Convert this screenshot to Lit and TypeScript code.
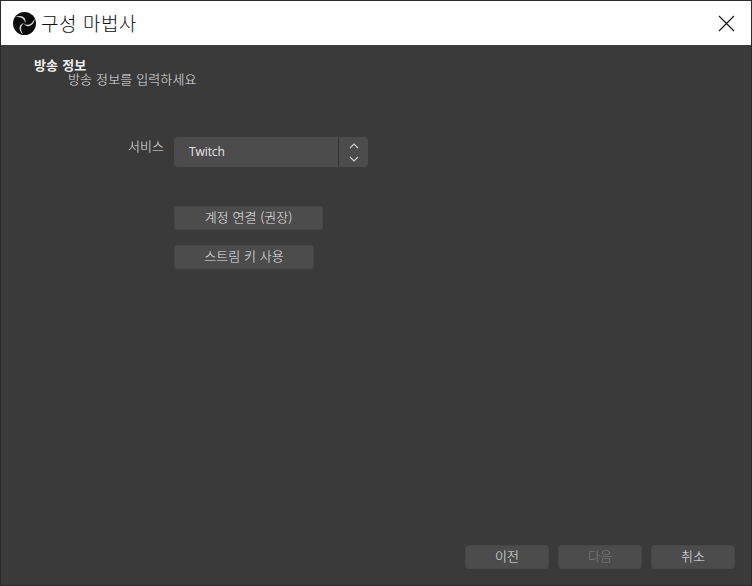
import { LitElement, html, css, svg } from "lit";
import { customElement } from "lit/decorators.js";

const FONT = css`"Noto Sans CJK KR", "Noto Sans", sans-serif`;

const blade = svg`<path d="M11.4 12.2 C14.6 14.6 19.6 13.6 22.4 7.4 C22.6 12.6 16.4 18.4 11.4 12.2 Z" fill="#d4d4d4"/>`;

@customElement("app-root")
export class AppRoot extends LitElement {
  static styles = css`
    :host {
      display: block;
      width: 752px;
      height: 586px;
      font-family: ${FONT};
      font-size: 13px;
      font-weight: 300;
      color: #e6e6e6;
    }
    .window {
      box-sizing: border-box;
      width: 752px;
      height: 586px;
      display: flex;
      flex-direction: column;
      background: #3a3a3a;
      border: 1px solid #2a2a2a;
    }
    .title {
      height: 44px;
      flex: none;
      background: #fff;
      color: #111;
      display: flex;
      align-items: center;
      padding: 0 14px 0 12px;
      gap: 5px;
    }
    .title h1 {
      margin: 0;
      font-size: 19px;
      font-weight: 300;
      letter-spacing: 0.6px;
      word-spacing: 1px;
      flex: 1;
      line-height: 24px;
    }
    .logo { width: 23px; height: 23px; flex: none; }
    .close { width: 17px; height: 17px; flex: none; margin-right: 2px; }
    .body {
      flex: 1;
      display: flex;
      flex-direction: column;
      padding: 12px 16px 0 33px;
    }
    .heading {
      font-size: 13px;
      font-weight: 700;
      line-height: 16px;
      letter-spacing: 0.1px;
      word-spacing: 1px;
      color: #efefef;
    }
    .sub {
      font-size: 13px;
      line-height: 14px;
      margin-top: -1px;
      margin-left: 34px;
      letter-spacing: 0.1px;
      word-spacing: 1px;
      color: #e2e2e2;
    }
    .form {
      margin-top: 51px;
      display: flex;
      flex-direction: column;
      margin-left: 94px;
    }
    .row { display: flex; gap: 10px; }
    .label { width: 36px; line-height: 18px; text-align: right; }
    .select { display: flex; width: 194px; height: 30px; }
    .value {
      flex: 1;
      background: #4c4c4c;
      border-radius: 4px 0 0 4px;
      padding-left: 15px;
      line-height: 29px;
      font-family: "Open Sans", sans-serif;
      font-size: 12px;
      font-weight: 400;
      letter-spacing: -0.1px;
    }
    .spin {
      width: 29px;
      background: #4c4c4c;
      border-left: 1px solid #333;
      border-radius: 0 4px 4px 0;
      display: flex;
      flex-direction: column;
      align-items: center;
      justify-content: center;
      gap: 7px;
    }
    .spin svg { width: 10px; height: 6px; display: block; }
    .buttons {
      margin-left: 46px;
      margin-top: 39px;
      display: flex;
      flex-direction: column;
      align-items: flex-start;
      gap: 15px;
    }
    button {
      font: inherit;
      color: #e6e6e6;
      background: #4c4c4c;
      border: 0;
      border-radius: 4px;
      padding: 0 0 2px;
      height: 24px;
      line-height: 22px;
      word-spacing: 1px;
      box-shadow: inset 0 0 0 1px #474747;
    }
    .b1 { width: 149px; }
    .b2 { width: 140px; }
    .footer {
      margin-top: auto;
      margin-bottom: 16px;
      display: flex;
      justify-content: flex-end;
      gap: 9px;
    }
    .footer button { width: 84px; }
    .footer button[disabled] { color: #7d7d7d; }
  `;

  render() {
    return html`
      <div class="window">
        <header class="title">
          <svg class="logo" viewBox="0 0 24 24">
            <circle cx="12" cy="12" r="12" fill="#0b0b0b" />
            <g>
              ${blade}
              <g transform="rotate(120 12 12)">${blade}</g>
              <g transform="rotate(240 12 12)">${blade}</g>
            </g>
          </svg>
          <h1>구성 마법사</h1>
          <svg class="close" viewBox="0 0 17 17">
            <path d="M1 1 L16 16 M16 1 L1 16" stroke="#111" stroke-width="1.1" fill="none" />
          </svg>
        </header>
        <main class="body">
          <div class="heading">방송 정보</div>
          <div class="sub">방송 정보를 입력하세요</div>
          <div class="form">
            <div class="row">
              <span class="label">서비스</span>
              <div class="select">
                <div class="value">Twitch</div>
                <div class="spin">
                  <svg viewBox="0 0 10 6"><path d="M1 5 L5 1 L9 5" stroke="#d0d0d0" stroke-width="1.1" fill="none" /></svg>
                  <svg viewBox="0 0 10 6"><path d="M1 1 L5 5 L9 1" stroke="#d0d0d0" stroke-width="1.1" fill="none" /></svg>
                </div>
              </div>
            </div>
            <div class="buttons">
              <button class="b1">계정 연결 (권장)</button>
              <button class="b2">스트림 키 사용</button>
            </div>
          </div>
          <div class="footer">
            <button>이전</button>
            <button disabled>다음</button>
            <button>취소</button>
          </div>
        </main>
      </div>
    `;
  }
}
